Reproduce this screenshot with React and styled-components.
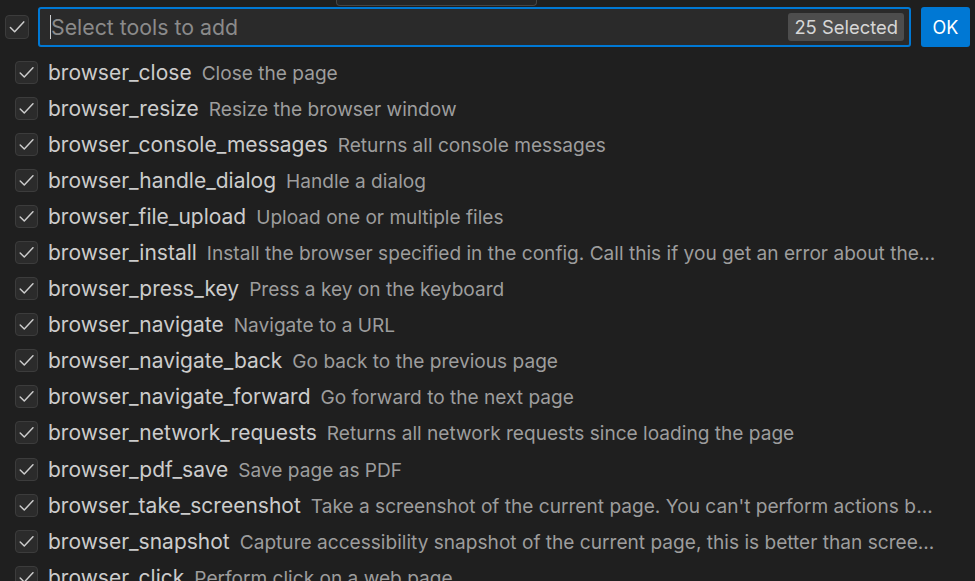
import React from "react";
import styled, { createGlobalStyle } from "styled-components";

const GlobalStyle = createGlobalStyle`
  html, body {
    margin: 0;
    padding: 0;
    background: #1f1f1f;
    overflow: hidden;
  }
  body {
    font-family: Inter, "Noto Sans", sans-serif;
  }
`;

const Page = styled.div`
  position: relative;
  width: 975px;
  height: 581px;
  background: #1f1f1f;
  overflow: hidden;
`;

const Header = styled.div`
  display: flex;
  align-items: center;
  padding: 7px 5px 0 5px;
  height: 40px;
`;

const Box = styled.div`
  flex: 0 0 auto;
  width: ${(p) => p.size}px;
  height: ${(p) => p.size}px;
  box-sizing: border-box;
  border: 1px solid #3c3c3c;
  border-radius: 4px;
  background: #2b2b2b;
  display: flex;
  align-items: center;
  justify-content: center;
`;

const Search = styled.div`
  flex: 1;
  height: 40px;
  margin-left: 9px;
  box-sizing: border-box;
  border: 2px solid #0078d4;
  border-radius: 3px;
  background: #2a2a2a;
  display: flex;
  align-items: center;
  padding: 0 5px 0 10px;
`;

const Placeholder = styled.div`
  flex: 1;
  font-size: 21.3px;
  color: #8b8b8b;
  border-left: 1.5px solid #cccccc;
  line-height: 24px;
`;

const Badge = styled.div`
  background: #4d4d4d;
  color: #d6d6d6;
  font-size: 18.4px;
  border-radius: 3px;
  padding: 3px 6px;
  line-height: 22px;
`;

const OkButton = styled.div`
  width: 49px;
  height: 40px;
  margin-left: 10px;
  background: #0078d4;
  color: #ffffff;
  font-size: 18px;
  border-radius: 3px;
  display: flex;
  align-items: center;
  justify-content: center;
`;

const List = styled.div`
  display: flex;
  flex-direction: column;
  padding: 7px 0 0 15px;
  width: 921px;
`;

const Row = styled.div`
  display: flex;
  align-items: center;
  height: 36.1px;
  min-width: 0;
`;

const Text = styled.div`
  margin-left: 10px;
  white-space: nowrap;
  overflow: hidden;
  text-overflow: ellipsis;
  color: #9d9d9d;
  font-size: 19.1px;
`;

const Name = styled.span`
  color: #cccccc;
  font-size: 21px;
  margin-right: 10px;
`;

const Overlay = styled.div`
  position: absolute;
  top: -2px;
  left: 336px;
  width: 201px;
  height: 8px;
  box-sizing: border-box;
  border: 1px solid #454545;
  border-top: none;
  border-radius: 0 0 4px 4px;
  background: #252526;
`;

const Check = ({ size }) => (
  <svg width={size} height={size} viewBox="0 0 16 16">
    <path
      d="M3.2 8.4 L6.3 11.5 L12.9 4.3"
      fill="none"
      stroke="#cccccc"
      strokeWidth="1.1"
      strokeLinecap="round"
      strokeLinejoin="round"
    />
  </svg>
);

const tools = [
  ["browser_close", "Close the page"],
  ["browser_resize", "Resize the browser window"],
  ["browser_console_messages", "Returns all console messages"],
  ["browser_handle_dialog", "Handle a dialog"],
  ["browser_file_upload", "Upload one or multiple files"],
  ["browser_install", "Install the browser specified in the config. Call this if you get an error about the browser not being installed."],
  ["browser_press_key", "Press a key on the keyboard"],
  ["browser_navigate", "Navigate to a URL"],
  ["browser_navigate_back", "Go back to the previous page"],
  ["browser_navigate_forward", "Go forward to the next page"],
  ["browser_network_requests", "Returns all network requests since loading the page"],
  ["browser_pdf_save", "Save page as PDF"],
  ["browser_take_screenshot", "Take a screenshot of the current page. You can't perform actions based on the screenshot, use browser_snapshot for actions."],
  ["browser_snapshot", "Capture accessibility snapshot of the current page, this is better than screenshot"],
  ["browser_click", "Perform click on a web page"],
];

export default function App() {
  return (
    <Page>
      <GlobalStyle />
      <Header>
        <Box size={24}>
          <Check size={22} />
        </Box>
        <Search>
          <Placeholder>Select tools to add</Placeholder>
          <Badge>25 Selected</Badge>
        </Search>
        <OkButton>OK</OkButton>
      </Header>
      <List>
        {tools.map(([name, desc]) => (
          <Row key={name}>
            <Box size={23}>
              <Check size={21} />
            </Box>
            <Text>
              <Name>{name}</Name>
              {desc}
            </Text>
          </Row>
        ))}
      </List>
      <Overlay />
    </Page>
  );
}
